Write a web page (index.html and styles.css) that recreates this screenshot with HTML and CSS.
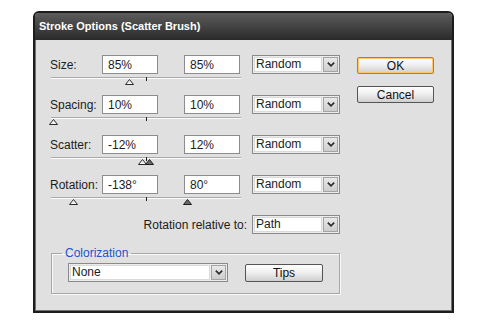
FILE: index.html
```html
<!DOCTYPE html>
<html lang="en">

<head>
  <meta charset="UTF-8">
  <meta name="viewport" content="width=device-width, initial-scale=1.0">
  <title>Stroke Options (Scatter Brush)</title>
  <link rel="stylesheet" href="styles.css">
</head>

<body>
  <div class="dialog">
    <div class="titlebar">Stroke Options (Scatter Brush)</div>
    <div class="dialog-body">
      <div class="main">

        <div class="param">
          <div class="fields">
            <label class="param-label">Size:</label>
            <input class="num" type="text" value="85%">
            <input class="num num-max" type="text" value="85%">
            <div class="select select-method">
              <span class="select-value">Random</span>
              <span class="select-arrow"><svg width="8" height="5" viewBox="0 0 8 5"><path d="M0.8 0.6 L4 3.8 L7.2 0.6" /></svg></span>
            </div>
          </div>
          <div class="slider">
            <span class="tick"></span>
            <svg class="thumb" style="left:74px" width="9" height="6" viewBox="0 0 9 6"><polygon points="4.5,0.5 8.5,5.5 0.5,5.5" /></svg>
          </div>
        </div>

        <div class="param">
          <div class="fields">
            <label class="param-label">Spacing:</label>
            <input class="num" type="text" value="10%">
            <input class="num num-max" type="text" value="10%">
            <div class="select select-method">
              <span class="select-value">Random</span>
              <span class="select-arrow"><svg width="8" height="5" viewBox="0 0 8 5"><path d="M0.8 0.6 L4 3.8 L7.2 0.6" /></svg></span>
            </div>
          </div>
          <div class="slider">
            <span class="tick"></span>
            <svg class="thumb" style="left:-2px" width="9" height="6" viewBox="0 0 9 6"><polygon points="4.5,0.5 8.5,5.5 0.5,5.5" /></svg>
          </div>
        </div>

        <div class="param">
          <div class="fields">
            <label class="param-label">Scatter:</label>
            <input class="num" type="text" value="-12%">
            <input class="num num-max" type="text" value="12%">
            <div class="select select-method">
              <span class="select-value">Random</span>
              <span class="select-arrow"><svg width="8" height="5" viewBox="0 0 8 5"><path d="M0.8 0.6 L4 3.8 L7.2 0.6" /></svg></span>
            </div>
          </div>
          <div class="slider">
            <span class="tick"></span>
            <svg class="thumb" style="left:87px" width="9" height="6" viewBox="0 0 9 6"><polygon points="4.5,0.5 8.5,5.5 0.5,5.5" /></svg>
            <svg class="thumb thumb-max" style="left:94px" width="9" height="6" viewBox="0 0 9 6"><polygon points="4.5,0.5 8.5,5.5 0.5,5.5" /></svg>
          </div>
        </div>

        <div class="param">
          <div class="fields">
            <label class="param-label">Rotation:</label>
            <input class="num" type="text" value="-138°">
            <input class="num num-max" type="text" value="80°">
            <div class="select select-method">
              <span class="select-value">Random</span>
              <span class="select-arrow"><svg width="8" height="5" viewBox="0 0 8 5"><path d="M0.8 0.6 L4 3.8 L7.2 0.6" /></svg></span>
            </div>
          </div>
          <div class="slider">
            <span class="tick"></span>
            <svg class="thumb" style="left:18px" width="9" height="6" viewBox="0 0 9 6"><polygon points="4.5,0.5 8.5,5.5 0.5,5.5" /></svg>
            <svg class="thumb thumb-max" style="left:132px" width="9" height="6" viewBox="0 0 9 6"><polygon points="4.5,0.5 8.5,5.5 0.5,5.5" /></svg>
          </div>
        </div>

        <div class="relative-row">
          <span>Rotation relative to:</span>
          <div class="select select-method">
            <span class="select-value">Path</span>
            <span class="select-arrow"><svg width="8" height="5" viewBox="0 0 8 5"><path d="M0.8 0.6 L4 3.8 L7.2 0.6" /></svg></span>
          </div>
        </div>

        <fieldset class="group">
          <legend>Colorization</legend>
          <div class="group-row">
            <div class="select select-wide">
              <span class="select-value">None</span>
              <span class="select-arrow"><svg width="8" height="5" viewBox="0 0 8 5"><path d="M0.8 0.6 L4 3.8 L7.2 0.6" /></svg></span>
            </div>
            <button class="btn btn-tips" type="button">Tips</button>
          </div>
        </fieldset>

      </div>
      <div class="actions">
        <button class="btn btn-default" type="button">OK</button>
        <button class="btn" type="button">Cancel</button>
      </div>
    </div>
  </div>
</body>

</html>
```

FILE: styles.css
```css
* {
  box-sizing: border-box;
  margin: 0;
  padding: 0;
}

body {
  font-family: "Liberation Sans", Arial, sans-serif;
  font-size: 12px;
  color: #1c1c1c;
  background-color: #fff;
}

/* window */

.dialog {
  width: 421px;
  height: 302px;
  margin: 11px 0 0 33px;
  border: 2px solid #1c1c1c;
  border-radius: 6px 6px 0 0;
  background-color: #e0e0e0;
  display: flex;
  flex-direction: column;
  overflow: hidden;
}

.titlebar {
  height: 27px;
  line-height: 27px;
  padding-left: 4px;
  font-size: 11px;
  font-weight: bold;
  color: #fff;
  background: linear-gradient(#5c5c5c, #2a2a2a);
}

.dialog-body {
  flex: 1;
  display: flex;
  align-items: flex-start;
  padding: 15px 0 0 14px;
  border: 1px solid #737373;
  border-top: none;
}

.main {
  width: 290px;
}

.actions {
  width: 77px;
  margin: 2px 0 0 17px;
  display: flex;
  flex-direction: column;
  gap: 12px;
}

/* parameter rows */

.fields {
  display: flex;
  align-items: center;
  height: 19px;
}

.param-label {
  width: 52px;
}

.num {
  width: 56px;
  height: 19px;
  padding: 0 5px;
  border: 1px solid #8c8c8c;
  background-color: #fff;
  font: inherit;
  color: inherit;
  outline: none;
}

.num-max {
  margin-left: 26px;
}

.select-method {
  width: 88px;
  margin-left: 12px;
}

.slider {
  position: relative;
  width: 190px;
  height: 21px;
  padding-top: 3px;
  margin-left: 1px;
}

.slider::before {
  content: "";
  display: block;
  border-top: 1px solid #a9a9a9;
  border-bottom: 1px solid #fbfbfb;
}

.tick {
  position: absolute;
  left: 95px;
  top: 3px;
  width: 1px;
  height: 4px;
  background-color: #1c1c1c;
}

.thumb {
  position: absolute;
  top: 5px;
  fill: #f2f2f2;
  stroke: #2b2b2b;
  stroke-width: 1;
}

.thumb-max {
  fill: #6a6a6a;
  stroke: #1e1e1e;
}

.relative-row {
  display: flex;
  justify-content: flex-end;
  align-items: center;
  gap: 5px;
  height: 19px;
}

.relative-row .select-method {
  margin-left: 0;
}

/* dropdowns */

.select {
  display: flex;
  height: 19px;
  padding: 1px;
  border: 1px solid #8a8a8a;
  background-color: #ececec;
}

.select-value {
  flex: 1;
  background-color: #fff;
  border: 1px solid #dadada;
  padding-left: 1px;
  line-height: 13px;
}

.select-arrow {
  width: 15px;
  margin-left: 1px;
  display: flex;
  align-items: center;
  justify-content: center;
  border: 1px solid #a4a4a4;
  background: linear-gradient(#e9e9e9, #cdcdcd);
}

.select-arrow path {
  fill: none;
  stroke: #2e2e2e;
  stroke-width: 1.7;
}

.select-wide {
  width: 160px;
}

/* colorization group */

.group {
  margin: 12px 0 0 1px;
  padding: 3px 16px 11px;
  border: 1px solid #a6a6a6;
  box-shadow: 1px 1px 0 #fafafa, inset 1px 1px 0 #fafafa;
}

.group legend {
  margin-left: -6px;
  padding: 0 3px;
  line-height: 14px;
  color: #2152cf;
}

.group-row {
  display: flex;
  align-items: flex-start;
}

/* buttons */

.btn {
  height: 17px;
  font: inherit;
  color: #111;
  border: 1px solid #555;
  border-radius: 2px;
  background: linear-gradient(#fefefe, #f0f0f0 45%, #cfcfcf);
  cursor: pointer;
}

.btn-default {
  border-color: #c77a12;
  box-shadow: inset 0 0 0 1px #ffc566;
}

.btn-tips {
  width: 78px;
  height: 18px;
  margin: 1px 0 0 17px;
}
```
